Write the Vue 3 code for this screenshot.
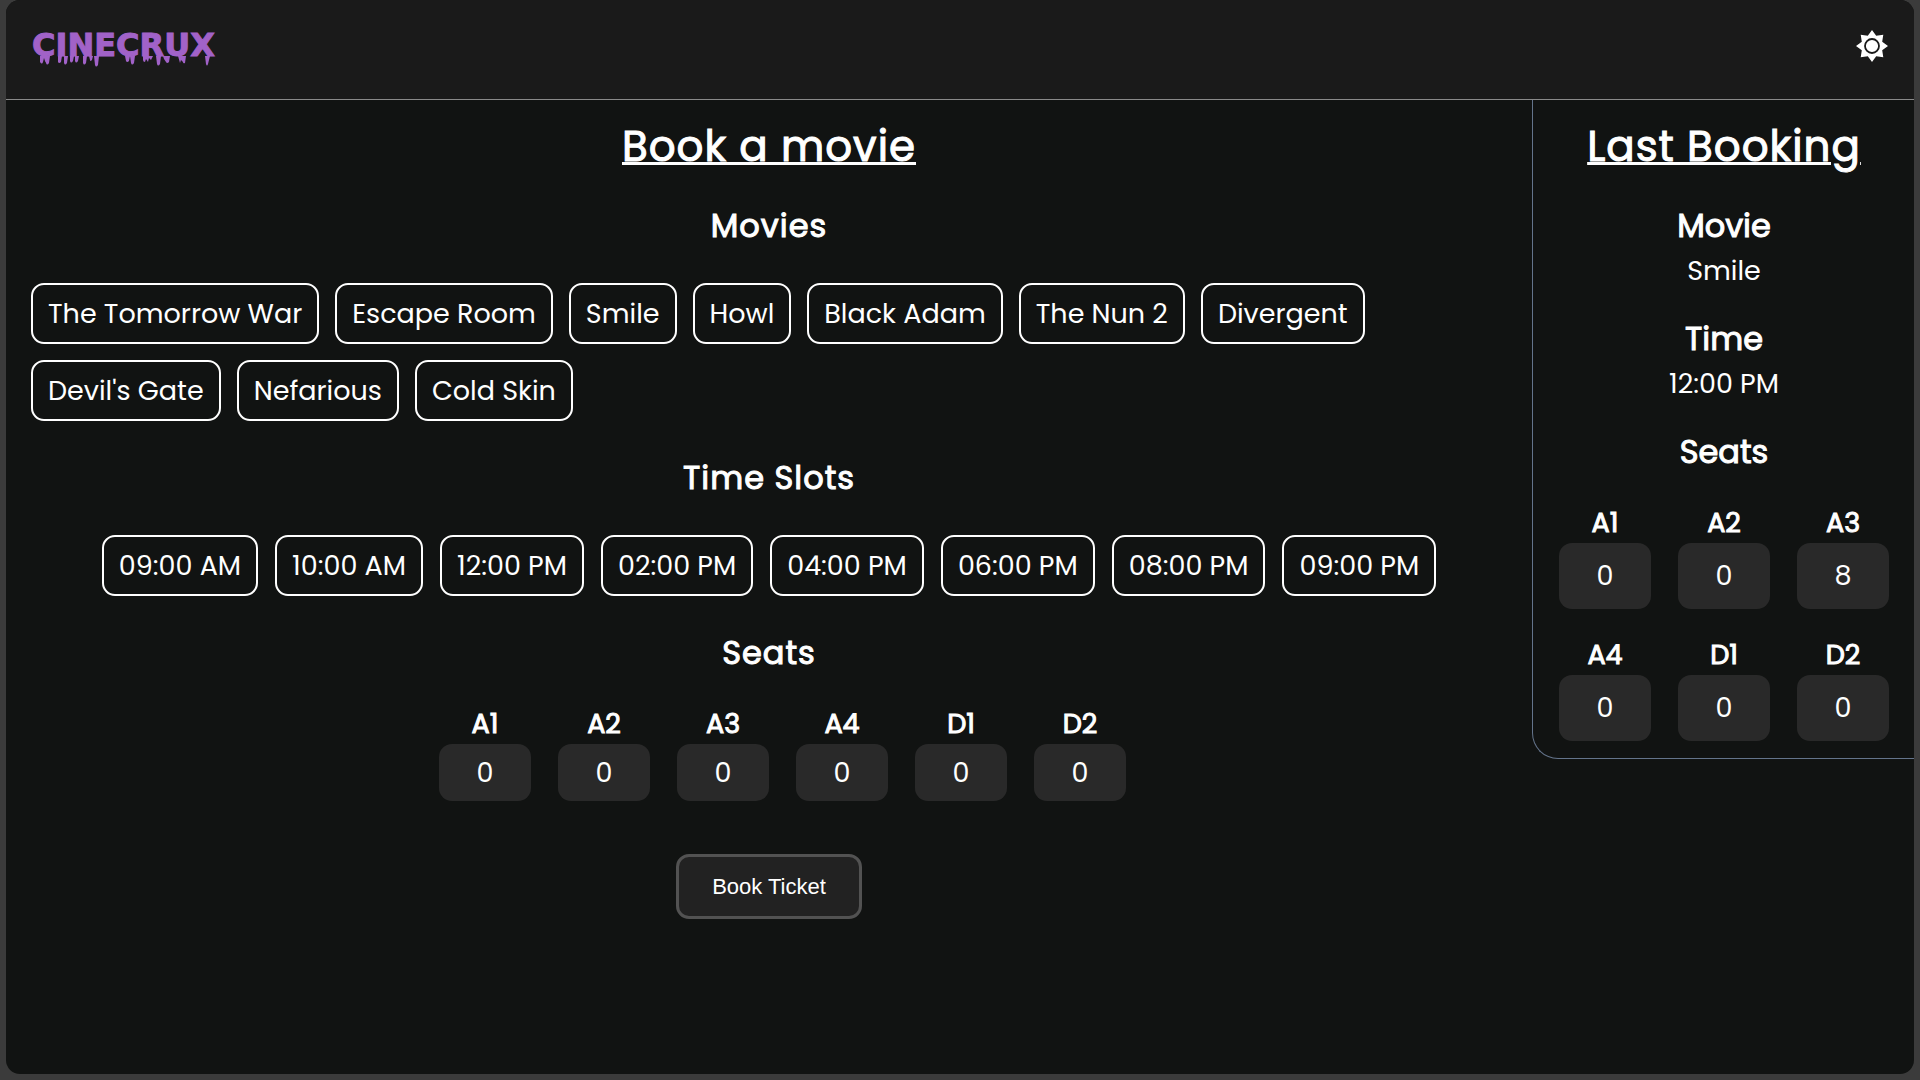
<script setup>
import { reactive, ref } from 'vue'

const movies = [
  'The Tomorrow War', 'Escape Room', 'Smile', 'Howl', 'Black Adam',
  'The Nun 2', 'Divergent', "Devil's Gate", 'Nefarious', 'Cold Skin',
]
const slots = [
  '09:00 AM', '10:00 AM', '12:00 PM', '02:00 PM',
  '04:00 PM', '06:00 PM', '08:00 PM', '09:00 PM',
]
const seatNames = ['A1', 'A2', 'A3', 'A4', 'D1', 'D2']

const movie = ref('')
const slot = ref('')
const seats = reactive({ A1: 0, A2: 0, A3: 0, A4: 0, D1: 0, D2: 0 })
const last = ref({
  movie: 'Smile',
  slot: '12:00 PM',
  seats: { A1: 0, A2: 0, A3: 8, A4: 0, D1: 0, D2: 0 },
})

function book() {
  if (!movie.value || !slot.value) return
  last.value = { movie: movie.value, slot: slot.value, seats: { ...seats } }
}
</script>

<template>
  <div class="shell">
    <header class="topbar">
      <a class="logo" href="#" aria-label="Cinecrux home">
        <span>CINECRUX</span>
        <svg class="drips" viewBox="0 0 188 12" width="188" height="12" aria-hidden="true">
          <path d="M8 0h8l-1 5q-1 3-2 0l-1-3-1 4q-1 3-3 0zM14 0h4l-1 7q-2 3-3 0zM26 0h4l-1 6q-2 2-3 0zM32 0h4l-1 7q-2 3-3 0zM38 0h4l-1 5q-2 3-3 0zM43 0h4l-1 5q-2 3-3 0zM51 0h4l-1 7q-2 3-3 0zM57 0h4l-1 4q-2 2-2 0zM62 0h5l-1 9q-2 3-3 0zM93 0h5l-1 5q-2 2-3 0zM98 0h5l-1 7q-2 3-3 0zM111 0h10l-2 4-2-2-1 4-2-3-1 3q-2 0-2-2zM124 0h5l-1 8q-2 3-3 0zM131 0h7l-1 6q-2 2-3 0l-2-3zM146 0h8l-1 7q-2 1-2-1l-2-2-1 3zM173 0h5l-2 8q-1 3-2 0z" />
        </svg>
      </a>
      <button class="theme" type="button" aria-label="Switch theme">
        <svg viewBox="0 0 32 32" width="32" height="32" aria-hidden="true">
          <path fill="#fff" d="M16 0l4.2 5.8 7.1-1.1-1.1 7.1L32 16l-5.8 4.2 1.1 7.1-7.1-1.1L16 32l-4.2-5.8-7.1 1.1 1.1-7.1L0 16l5.8-4.2-1.1-7.1 7.1 1.1z" />
          <circle cx="16" cy="16" r="7" fill="#fff" stroke="#1a1a1a" stroke-width="1.8" />
        </svg>
      </button>
    </header>

    <main class="content">
      <form class="booking" @submit.prevent="book">
        <h1>Book a movie</h1>

        <h2>Movies</h2>
        <div class="pills">
          <button
            v-for="m in movies" :key="m" type="button" class="pill"
            :class="{ chosen: m === movie }" @click="movie = m"
          >{{ m }}</button>
        </div>

        <h2>Time Slots</h2>
        <div class="pills centered">
          <button
            v-for="s in slots" :key="s" type="button" class="pill"
            :class="{ chosen: s === slot }" @click="slot = s"
          >{{ s }}</button>
        </div>

        <h2 class="seats-title">Seats</h2>
        <div class="seats">
          <div v-for="n in seatNames" :key="n" class="seat">
            <label :for="'seat-' + n">{{ n }}</label>
            <input :id="'seat-' + n" v-model.number="seats[n]" type="number" min="0">
          </div>
        </div>

        <button class="submit" type="submit">Book Ticket</button>
      </form>

      <aside class="last">
        <h1>Last Booking</h1>
        <h3>Movie</h3>
        <p>{{ last.movie }}</p>
        <h3>Time</h3>
        <p>{{ last.slot }}</p>
        <h3 class="seats-title">Seats</h3>
        <dl class="summary">
          <div v-for="n in seatNames" :key="n">
            <dt>{{ n }}</dt>
            <dd>{{ last.seats[n] }}</dd>
          </div>
        </dl>
      </aside>
    </main>
  </div>
</template>

<style>
body {
  background: #3b3b3b;
}
</style>

<style scoped>
* {
  box-sizing: border-box;
}

.shell {
  min-height: calc(100vh - 6px);
  margin: 0 6px 6px;
  border-radius: 14px;
  overflow: hidden;
  background: #111312;
  color: #fff;
  font-family: Poppins, Inter, sans-serif;
  font-size: 27px;
}

.topbar {
  display: flex;
  align-items: flex-start;
  justify-content: space-between;
  height: 100px;
  padding: 30px 26px 0;
  border-bottom: 1px solid #8a8a8a;
  background: #1a1a1a;
}

.logo {
  display: grid;
  margin-top: 4px;
  color: #a162c8;
  font: bold 32px/22px "DejaVu Sans", sans-serif;
  -webkit-text-stroke: 1px #a162c8;
  text-decoration: none;
}

.drips {
  display: block;
  fill: #a162c8;
}

.theme {
  padding: 0;
  border: 0;
  background: none;
}

.theme svg {
  display: block;
}

.content {
  display: flex;
  align-items: flex-start;
}

.booking {
  flex: 1;
  display: flex;
  flex-direction: column;
  align-items: center;
  padding: 15px 25px 27px;
}

h1,
h2,
h3,
p {
  margin: 0;
  text-align: center;
}

h1,
h2,
h3,
label,
dt {
  font-weight: 400;
  -webkit-text-stroke: 1px #fff;
}

h1,
h2 {
  letter-spacing: 1px;
}

h1 {
  font-size: 42px;
  line-height: 63px;
  text-decoration: underline 3px;
  text-underline-offset: 1px;
}

h2,
h3 {
  margin-top: 24px;
  font-size: 32px;
  line-height: 48px;
}

h2 {
  margin-bottom: 33px;
}

.pills {
  display: flex;
  flex-wrap: wrap;
  gap: 16px;
  width: 100%;
  margin-bottom: 9px;
}

.centered {
  justify-content: center;
  column-gap: 17px;
}

.pill {
  height: 61px;
  padding: 0 15px;
  border: 2px solid #fff;
  border-radius: 13px;
  background: none;
  color: inherit;
  font: inherit;
}

.chosen {
  background: #292929;
}

.seats-title {
  margin-bottom: 27px;
}

.seats {
  display: flex;
  gap: 27px;
  padding-left: 27px;
}

.seat {
  display: grid;
}

label,
dt {
  line-height: 40px;
  text-align: center;
}

input,
dd {
  width: 92px;
  margin: 0;
  border: 0;
  border-radius: 13px;
  background: #292929;
  color: inherit;
  font: inherit;
  text-align: center;
}

input {
  height: 57px;
  appearance: textfield;
}

input::-webkit-inner-spin-button {
  display: none;
}

dd {
  line-height: 66px;
}

.submit {
  width: 186px;
  height: 65px;
  margin-top: 53px;
  border: 3px solid #525252;
  border-radius: 13px;
  background: #222;
  color: #fff;
  font: 22px "Liberation Sans", sans-serif;
}

.last {
  flex: none;
  padding: 15px 25px 17px 26px;
  border: solid #64748b;
  border-width: 0 0 1px 1px;
  border-bottom-left-radius: 26px;
}

p {
  line-height: 41px;
}

.summary {
  display: grid;
  grid-template-columns: repeat(3, 92px);
  gap: 26px 27px;
  margin: 0;
}
</style>
